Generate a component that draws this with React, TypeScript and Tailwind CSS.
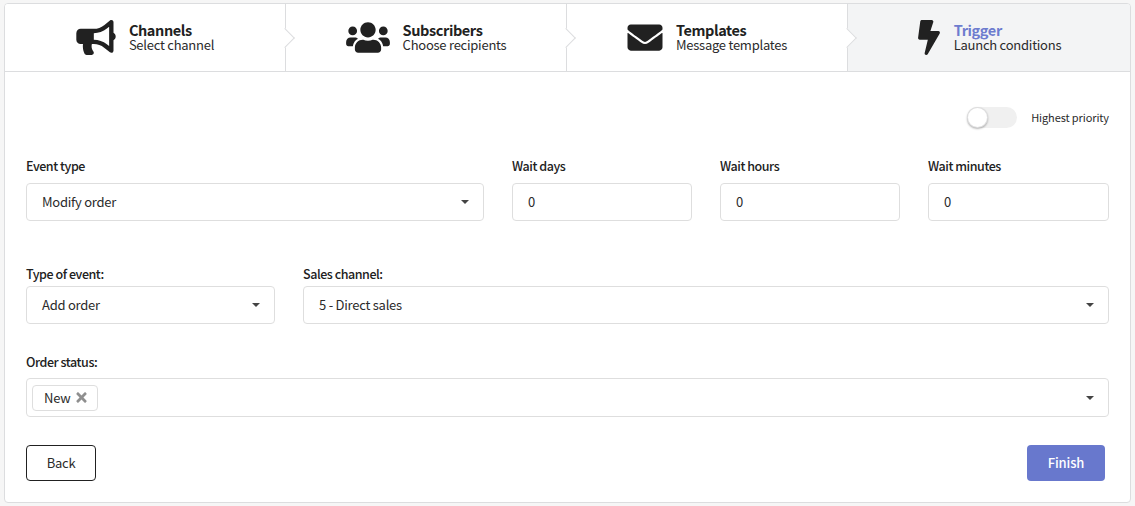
import { FaBullhorn, FaUsers, FaEnvelope, FaBolt, FaTimes } from "react-icons/fa";
import type { ReactNode } from "react";

const font = "font-['Noto_Sans_CJK_SC','Source_Sans_Pro',sans-serif]";

type Step = {
  title: string;
  desc: string;
  icon: ReactNode;
  active?: boolean;
};

const steps: Step[] = [
  { title: "Channels", desc: "Select channel", icon: <FaBullhorn className="w-[40px] h-[35px]" /> },
  { title: "Subscribers", desc: "Choose recipients", icon: <FaUsers className="w-[44px] h-[35px]" /> },
  { title: "Templates", desc: "Message templates", icon: <FaEnvelope className="w-[36px] h-[35px]" /> },
  { title: "Trigger", desc: "Launch conditions", icon: <FaBolt className="w-[24px] h-[35px]" />, active: true },
];

function StepItem({ step, last }: { step: Step; last: boolean }) {
  return (
    <div
      className={`relative flex items-center justify-center gap-[13px] ${
        last ? "flex-1" : "w-[281px] border-r border-[#dcdddf]"
      } ${step.active ? "bg-[#f3f4f5]" : "bg-white"}`}
    >
      <span className="text-[#212121] flex">{step.icon}</span>
      <div className="flex flex-col pb-[2px]">
        <span
          className={`text-[14.5px] leading-[15px] font-semibold tracking-[-0.4px] ${
            step.active ? "text-[#6d7ccf]" : "text-[#212121]"
          }`}
        >
          {step.title}
        </span>
        <span className="text-[13px] leading-[15px] tracking-[-0.25px] text-[#2b2b2b]">{step.desc}</span>
      </div>
      {!last && (
        <span className="absolute right-[-7px] top-1/2 -mt-[7px] w-[14px] h-[14px] rotate-45 bg-white border-t border-r border-[#dcdddf] z-10" />
      )}
    </div>
  );
}

function Caret() {
  return <span className="w-0 h-0 border-x-[4px] border-x-transparent border-t-[4px] border-t-[#444]" />;
}

function Field({
  label,
  value,
  select,
  className,
  gap,
}: {
  label: string;
  value: string;
  select?: boolean;
  className: string;
  gap: string;
}) {
  return (
    <div className={`flex flex-col ${className}`}>
      <label className={`text-[12.5px] leading-[17px] font-medium tracking-[-0.45px] text-[#212121] ${gap}`}>{label}</label>
      <div className="h-[38px] pl-[15px] pr-[14px] flex items-center justify-between border border-[#dedede] rounded-[4px] bg-white text-[13px] leading-[16px] tracking-[-0.25px] text-[#2b2b2b]">
        <span>{value}</span>
        {select && <Caret />}
      </div>
    </div>
  );
}

export default function App() {
  return (
    <div className={`${font} w-[1135px] h-[506px] bg-[#f6f6f6] pt-[3px] px-[4px] overflow-hidden`}>
      <div className="w-[1127px] h-[500px] bg-white border border-[#dcdddf] rounded-[4px] overflow-hidden flex flex-col">
        <div className="h-[68px] flex border-b border-[#dcdddf]">
          {steps.map((s, i) => (
            <StepItem key={s.title} step={s} last={i === steps.length - 1} />
          ))}
        </div>

        <div className="flex-1 px-[21px] pt-[34px]">
          <div className="flex justify-end items-center gap-[14px] h-[22px]">
            <div className="relative w-[50px] h-[21px] rounded-full bg-[#f0f0f0]">
              <span className="absolute left-0 top-0 w-[21px] h-[21px] rounded-full bg-white shadow-[0_1px_2px_rgba(0,0,0,0.3),inset_0_0_0_1px_rgba(34,36,38,0.15)]" />
            </div>
            <span className="text-[11px] tracking-[-0.1px] text-[#2b2b2b]">Highest priority</span>
          </div>

          <div className="flex gap-[28px] mt-[29px]">
            <Field className="w-[458px]" gap="mb-[9px]" label="Event type" value="Modify order" select />
            <Field className="w-[180px]" gap="mb-[9px]" label="Wait days" value="0" />
            <Field className="w-[180px]" gap="mb-[9px]" label="Wait hours" value="0" />
            <Field className="w-[181px]" gap="mb-[9px]" label="Wait minutes" value="0" />
          </div>

          <div className="flex gap-[28px] mt-[44px]">
            <Field className="w-[249px]" gap="mb-[4px]" label="Type of event:" value="Add order" select />
            <Field className="flex-1" gap="mb-[4px]" label="Sales channel:" value="5 - Direct sales" select />
          </div>

          <div className="flex flex-col mt-[29px]">
            <label className="text-[12.5px] leading-[17px] font-medium tracking-[-0.45px] text-[#212121] mb-[8px]">
              Order status:
            </label>
            <div className="h-[39px] pl-[5px] pr-[14px] flex items-center justify-between border border-[#dedede] rounded-[4px]">
              <span className="h-[26px] pl-[11px] pr-[10px] flex items-center gap-[6px] border border-[#dedede] rounded-[4px] text-[13px] leading-[16px] tracking-[-0.25px] text-[#2b2b2b]">
                New
                <FaTimes className="w-[11px] h-[15px] text-[#8f8f8f]" />
              </span>
              <Caret />
            </div>
          </div>

          <div className="flex justify-between items-center mt-[28px] pr-[4px]">
            <button className="w-[70px] h-[36px] border border-[#212121] rounded-[4px] bg-white text-[13px] tracking-[-0.25px] text-[#2b2b2b]">
              Back
            </button>
            <button className="w-[78px] h-[36px] rounded-[4px] bg-[#6878cd] text-[13px] font-medium tracking-[-0.1px] text-white">
              Finish
            </button>
          </div>
        </div>
      </div>
    </div>
  );
}
